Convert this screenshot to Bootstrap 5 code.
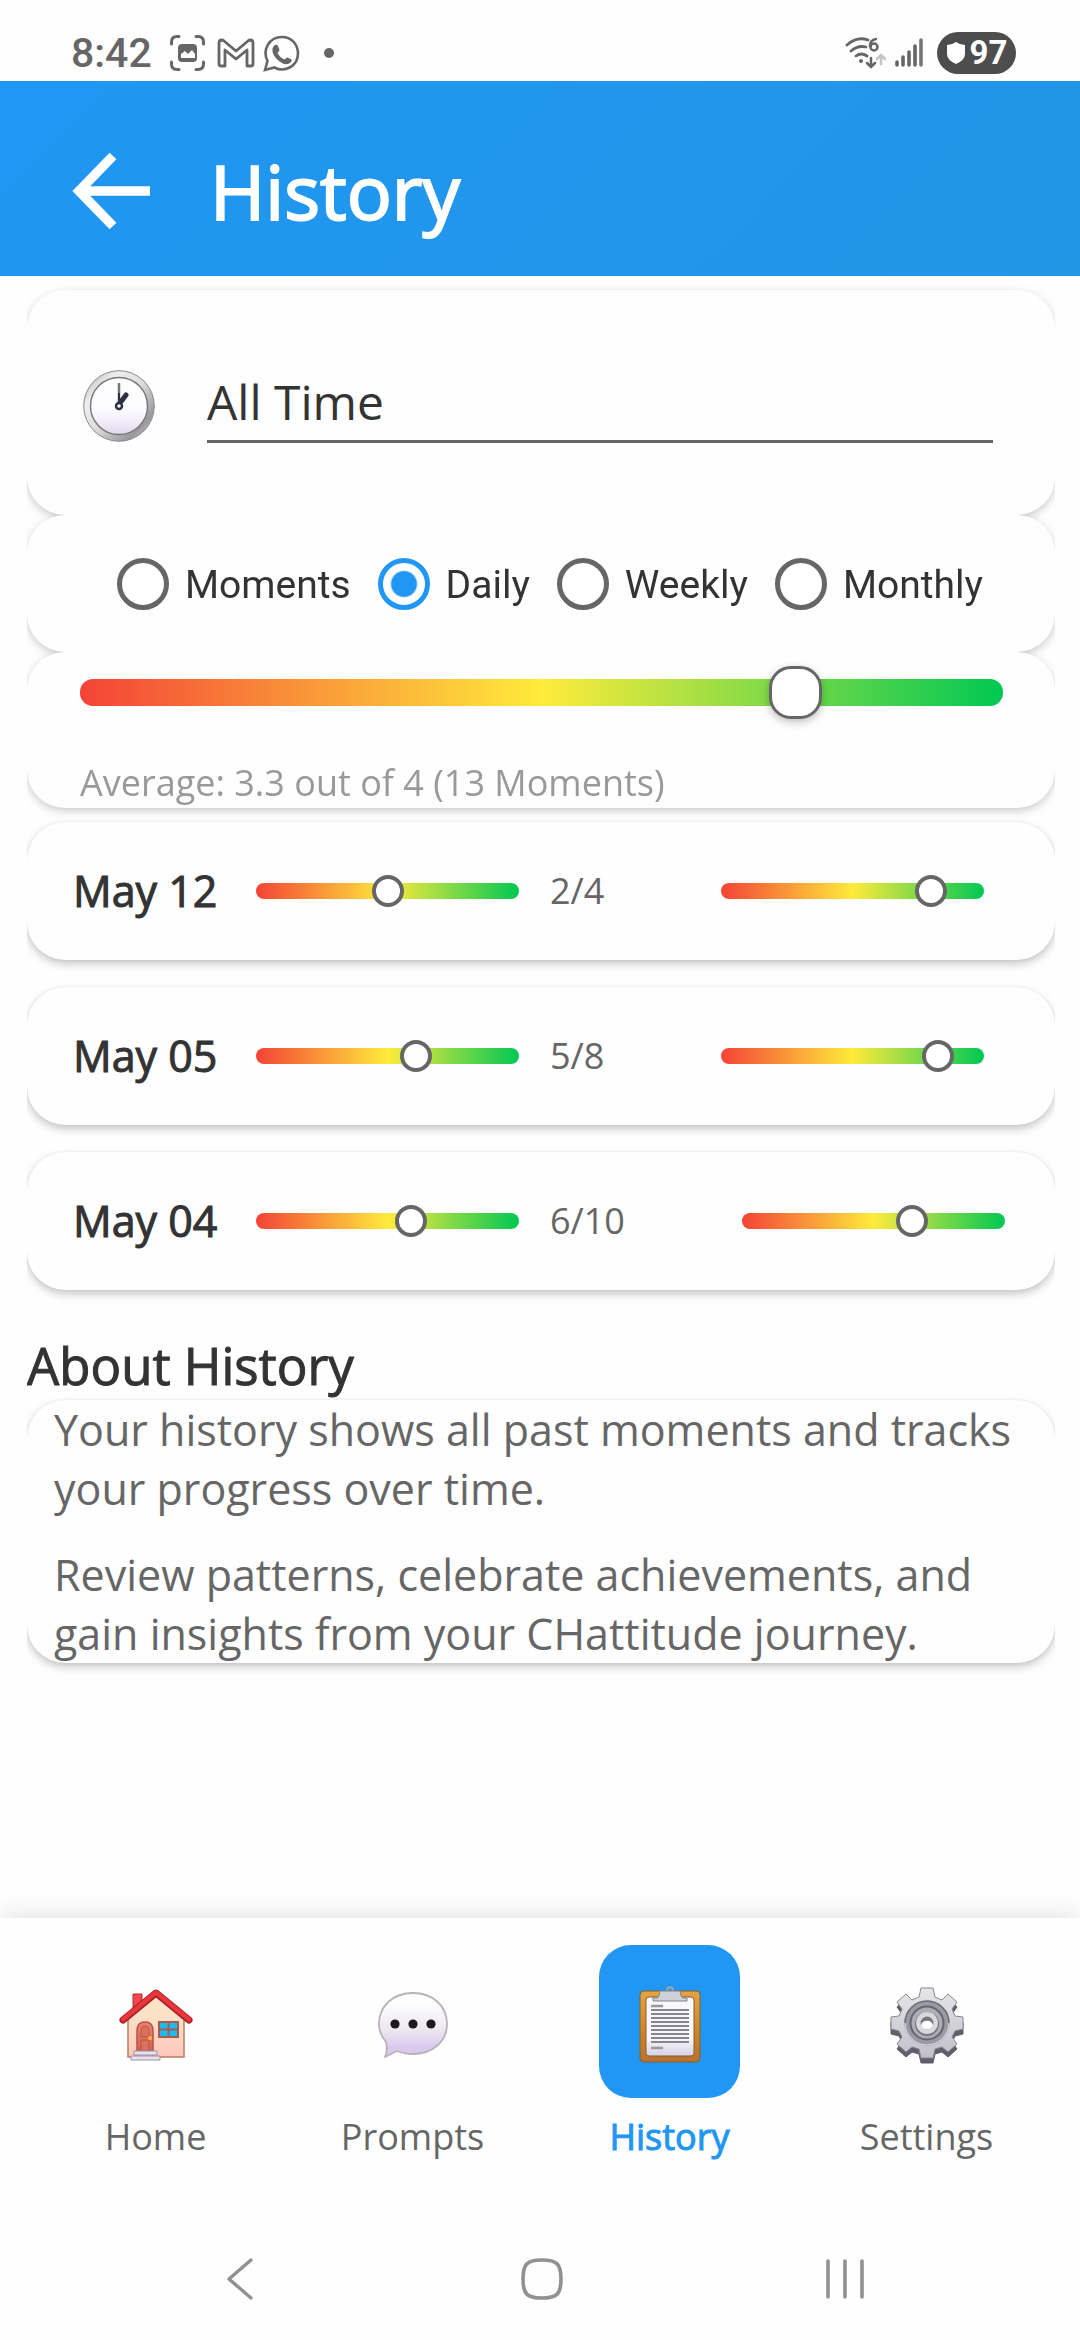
<!DOCTYPE html>
<html lang="en">
<head>
<meta charset="utf-8">
<meta name="viewport" content="width=device-width, initial-scale=1">
<title>History</title>
<link rel="stylesheet" href="https://cdn.jsdelivr.net/npm/bootstrap@5.3.0/dist/css/bootstrap.min.css">
<style>
  :root { --ink: #333; --soft: #666; --accent: #2196f3; --meter: linear-gradient(90deg, #f44336, #ffeb3b 50%, #00c853); }
  body { background: #fefefe; color: var(--ink); font-family: "Open Sans", "Noto Sans", sans-serif; }
  svg { display: block; flex: none; }

  .status-bar { height: 81px; padding: 25px 64px 0 71px; color: #666; font-family: Roboto, sans-serif; }
  .clock-text { font-size: 41px; font-weight: 500; line-height: 48px; width: 99px; }
  .battery { width: 79px; height: 42px; background: #4d4d4d; font-size: 33px; font-weight: 700; line-height: 42px; gap: 4px; margin-left: 14px; }

  .app-bar { background: linear-gradient(135deg, #2196f3, #2196e5); padding: 58px 72px 33px; gap: 59px; }
  .app-bar h1 { font-size: 75px; line-height: 104px; font-weight: 400; -webkit-text-stroke: 2px #fff; }

  .page { padding: 14px 25px 40px 27px; }
  .page-inner { overflow-x: clip; }
  .panel { background: #fefefe; border: 0; border-radius: 38px; box-shadow: 0 4px 8px rgba(0,0,0,.22), 0 0 2px rgba(0,0,0,.08); }
  .panel-stack { filter: drop-shadow(0 3px 4px rgba(0,0,0,.2)); }
  .panel-stack .panel { box-shadow: none; }

  .range-panel { padding: 78px 62px 72px 56px; gap: 52px; }
  .range-select { font-size: 48px; line-height: 66px; padding: 1px 0 5px; border: 0; border-bottom: 3px solid var(--soft); border-radius: 0; background: none; color: var(--ink); appearance: none; }

  .period-panel { padding: 43px 24px 42px 90px; gap: 27px; font-family: Roboto, sans-serif; font-size: 39px; line-height: 52px; }
  .period { gap: 16px; }
  .period label { padding-top: 2px; line-height: 50px; }
  .period .form-check-input { width: 52px; height: 52px; margin: 0; border: 5px solid var(--soft); background: #fff; }
  .period .form-check-input:checked { border-color: var(--accent); background: radial-gradient(circle, var(--accent) 12px, #fff 14px); }

  .average-panel { padding: 14px 52px 0 53px; }
  .average-text { font-size: 36px; line-height: 50px; color: #999; margin-top: 40px; }

  .meter { appearance: none; -webkit-appearance: none; display: block; margin: 0; width: 263px; height: 32px; background: none; flex: none; }
  .meter::-webkit-slider-runnable-track { height: 16px; border-radius: 8px; background: var(--meter); }
  .meter::-webkit-slider-thumb { -webkit-appearance: none; width: 32px; height: 32px; margin-top: -8px; border: 4px solid var(--soft); border-radius: 50%; background: #fff; }
  .meter-lg { width: 100%; height: 52px; }
  .meter-lg::-webkit-slider-runnable-track { height: 27px; border-radius: 13px; }
  .meter-lg::-webkit-slider-thumb { width: 53px; height: 53px; margin-top: -13px; border-width: 3px; border-radius: 22px; box-shadow: 0 3px 8px rgba(0,0,0,.25); }

  .day-list { gap: 27px; margin-top: 14px; }
  .day { height: 138px; padding: 0 46px; }
  .day-name { min-width: 183px; font-size: 43px; line-height: 58px; -webkit-text-stroke: 1px var(--ink); }
  .day-score { font-size: 36px; line-height: 50px; color: var(--soft); margin: 0 117px 0 31px; }

  .about-title { font-size: 51px; line-height: 70px; font-weight: 400; margin: 40px 0 0; -webkit-text-stroke: 1px var(--ink); }
  .about-panel { padding: 0 27px; font-size: 43px; line-height: 59px; color: var(--soft); gap: 27px; }

  .tab-bar { padding: 27px 25px 57px 27px; background: #fefefe; box-shadow: 0 -4px 24px rgba(0,0,0,.1); }
  .tab { gap: 14px; font-size: 36px; line-height: 50px; color: var(--soft); }
  .tab-icon { width: 141px; height: 153px; padding-top: 6px; border-radius: 32px; }
  .tab.active { color: var(--accent); -webkit-text-stroke: 1px var(--accent); }
  .tab.active .tab-icon { background: var(--accent); }
  .system-bar { height: 121px; padding: 0 84px 2px 89px; background: #fefefe; }
</style>
</head>
<body>
<div class="d-flex flex-column min-vh-100">
  <div class="status-bar d-flex align-items-center justify-content-between">
    <div class="d-flex align-items-center">
      <span class="clock-text">8:42</span>
      <svg width="35" height="36" viewBox="0 0 35 36" fill="none" stroke="#666" stroke-width="3" stroke-linecap="round"><path d="M1.500 9V7q0-5.500 5.500-5.500h2M26 1.500h2q5.500 0 5.500 5.500v2M33.500 27v2q0 5.500-5.500 5.500h-2M9 34.500H7q-5.500 0-5.500-5.500v-2"/><rect x="8" y="9" width="19" height="18" rx="4" fill="#666" stroke="none"/><path d="M11 23v-4l4-3 3 3 4-4 3 4v4z" fill="#fefefe" stroke="none"/></svg>
      <svg class="ms-2 ps-1" width="42" height="36" viewBox="0 0 38 36" fill="none" stroke="#666" stroke-width="2.800" stroke-linejoin="round"><path d="M2 29V8q0-3 3-3 1 0 2 1l12 10 12-10q1-1 2-1 3 0 3 3v21q0 2-2 2h-4V15l-11 9-11-9v16H4q-2 0-2-2z"/></svg>
      <svg class="ms-2" width="37" height="37" viewBox="0 0 37 37"><path d="M2 35 4.500 26C-1 15 6 2 19 2c9 0 16 7 16 16.500C35 31 22 38 11.500 32.500z" fill="none" stroke="#666" stroke-width="2.600"/><path d="M12 10q2-1 3 1l1.500 4q0 1-2 3 3 5 7 6.500 2-2 3-2l4 2q1 1-1 3-4 4-11-1-8-6-7-13 1-3 2.500-3.500z" fill="#666"/></svg>
      <svg class="ms-4" width="10" height="10" viewBox="0 0 10 10"><circle cx="5" cy="5" r="5" fill="#666"/></svg>
    </div>
    <div class="d-flex align-items-center">
      <svg width="42" height="34" viewBox="0 0 42 34" fill="none" stroke="#666" stroke-width="2.800" stroke-linecap="round"><path d="M2 9Q12 0 23 4M6 15q7-6 15-4M11 20q5-4 11 0"/><circle cx="16" cy="25" r="2" fill="#666" stroke="none"/><path d="M31 3q-6 1-6 7" stroke-width="2.500"/><circle cx="29" cy="11" r="3.500" stroke-width="2.500"/><path d="M26 22v9m-4-4 4 4 4-4" stroke-width="2.500"/><path d="M36 28v-9m-4 4 4-4 4 4" stroke="#c4c4c4" stroke-width="2.500"/></svg>
      <svg class="ms-2" width="28" height="32" viewBox="0 0 28 32" stroke="#666" stroke-width="3.600" stroke-linecap="round"><path d="M2 28v-3M8 28v-8M14 28V15M20 28V9"/><path d="M26 28V3" stroke="#777"/></svg>
      <div class="battery d-flex align-items-center justify-content-center rounded-pill text-white">
        <svg width="20" height="24" viewBox="0 0 20 24"><path d="M10 1Q14 4 19 4v9q0 6-9 10Q1 19 1 13V4q5 0 9-3z" fill="#fff"/></svg><span>97</span>
      </div>
    </div>
  </div>

  <header class="app-bar d-flex align-items-center text-white">
    <button type="button" class="btn p-0 border-0" aria-label="Back">
      <svg width="79" height="78" viewBox="0 0 79 78" fill="none" stroke="#fff" stroke-width="9.500"><path d="M78 39H9M41 4 7 39l34 35"/></svg>
    </button>
    <h1 class="m-0">History</h1>
  </header>

  <main class="page flex-grow-1">
    <div class="page-inner">
      <div class="panel-stack">
        <section class="panel range-panel d-flex align-items-center">
          <svg width="72" height="72" viewBox="0 0 72 72">
            <defs>
              <linearGradient id="rim" x1="0" y1="0" x2="1" y2="1"><stop offset="0" stop-color="#aaa"/><stop offset=".25" stop-color="#eee"/><stop offset=".5" stop-color="#ddd"/><stop offset=".8" stop-color="#99999d"/><stop offset="1" stop-color="#ddd"/></linearGradient>
              <linearGradient id="face" x1="0" y1="0" x2="0" y2="1"><stop offset="0" stop-color="#fff"/><stop offset=".6" stop-color="#fbfaff"/><stop offset="1" stop-color="#e2d8f0"/></linearGradient>
            </defs>
            <circle cx="36" cy="36" r="35.300" fill="url(#rim)" stroke="#8a8a8a"/>
            <circle cx="36" cy="36" r="28.500" fill="url(#face)" stroke="#777" stroke-width="1.400"/>
            <path d="M36 34V13" stroke="#777" stroke-width="2.500"/><path d="M37 33l6-8" stroke="#2d3040" stroke-width="5" stroke-linecap="round"/><path d="M36 34V23" stroke="#2d3040" stroke-width="2"/>
            <circle cx="36" cy="36" r="3" fill="#fff" stroke="#2d3040" stroke-width="2.500"/>
          </svg>
          <select class="range-select w-100" aria-label="Time range"><option>All Time</option></select>
        </section>

        <section class="panel period-panel d-flex">
          <div class="period d-flex align-items-center"><input class="form-check-input" type="radio" name="period" id="p1"><label for="p1">Moments</label></div>
          <div class="period d-flex align-items-center"><input class="form-check-input" type="radio" name="period" id="p2" checked><label for="p2">Daily</label></div>
          <div class="period d-flex align-items-center"><input class="form-check-input" type="radio" name="period" id="p3"><label for="p3">Weekly</label></div>
          <div class="period d-flex align-items-center"><input class="form-check-input" type="radio" name="period" id="p4"><label for="p4">Monthly</label></div>
        </section>

        <section class="panel average-panel">
          <input type="range" class="meter meter-lg" id="avg" min="0" max="1000" value="792">
          <label class="average-text d-block" for="avg">Average: 3.3 out of 4 (13 Moments)</label>
        </section>
      </div>

      <div class="day-list d-flex flex-column">
        <div class="panel day d-flex align-items-center">
          <div class="day-name">May 12</div>
          <input type="range" class="meter" min="0" max="1000" value="500" aria-label="May 12 completed">
          <div class="day-score">2/4</div>
          <input type="range" class="meter" min="0" max="1000" value="837" aria-label="May 12 average">
        </div>
        <div class="panel day d-flex align-items-center">
          <div class="day-name">May 05</div>
          <input type="range" class="meter" min="0" max="1000" value="625" aria-label="May 05 completed">
          <div class="day-score">5/8</div>
          <input type="range" class="meter" min="0" max="1000" value="870" aria-label="May 05 average">
        </div>
        <div class="panel day d-flex align-items-center">
          <div class="day-name">May 04</div>
          <input type="range" class="meter" min="0" max="1000" value="600" aria-label="May 04 completed">
          <div class="day-score">6/10</div>
          <input type="range" class="meter" min="0" max="1000" value="667" aria-label="May 04 average">
        </div>
      </div>

      <h2 class="about-title">About History</h2>
      <section class="panel about-panel d-flex flex-column">
        <p class="m-0">Your history shows all past moments and tracks your progress over time.</p>
        <p class="m-0">Review patterns, celebrate achievements, and gain insights from your CHattitude journey.</p>
      </section>
    </div>
  </main>

  <nav class="tab-bar row row-cols-4 g-0" aria-label="Main">
    <a href="#" class="tab col d-flex flex-column align-items-center text-decoration-none">
      <span class="tab-icon d-flex align-items-center justify-content-center">
        <svg width="74" height="76" viewBox="0 0 74 76">
          <defs><linearGradient id="wall" x1="0" y1="0" x2="0" y2="1"><stop offset=".3" stop-color="#fae3c8"/><stop offset="1" stop-color="#ffc6bd"/></linearGradient>
          <linearGradient id="door" x1="0" y1="0" x2="0" y2="1"><stop offset="0" stop-color="#ee8570"/><stop offset="1" stop-color="#cf6154"/></linearGradient></defs>
          <path d="M14 7h9v16l-9 8z" fill="#f0474f" stroke="#b72a30"/>
          <path d="M9 30 37 8l28 22v40H9z" fill="url(#wall)" stroke="#b97f60" stroke-width="1.500"/>
          <path d="M4 33 37 6l33 27" fill="none" stroke="#a81c22" stroke-width="7" stroke-linecap="round" stroke-linejoin="round"/>
          <path d="M4 32.500 37 5.500l33 27" fill="none" stroke="#e9363d" stroke-width="4.500" stroke-linecap="round" stroke-linejoin="round"/>
          <path d="M18 66V44q0-9 8-9t8 9v22z" fill="url(#door)" stroke="#b75345" stroke-width="1.500"/><path d="M22 50v-6q0-5 4-5t4 5v6zM22 53h8v11h-8z" fill="#dc705f" stroke="#b95546"/><circle cx="31" cy="51" r="2" fill="#ffb62e"/>
          <path d="M40 35h19v15H40z" fill="#1bbdf0" stroke="#a95b50" stroke-width="2"/><path d="M49.500 35v15M40 42.500h19" stroke="#a95b50" stroke-width="2"/>
          <path d="M15 64h23v4H15zM12 69h29v4H12z" fill="#e8e2ee" stroke="#98919e"/>
        </svg>
      </span>
      <span>Home</span>
    </a>
    <a href="#" class="tab col d-flex flex-column align-items-center text-decoration-none">
      <span class="tab-icon d-flex align-items-center justify-content-center">
        <svg width="72" height="68" viewBox="0 0 72 68">
          <defs><linearGradient id="bub" x1="0" y1="0" x2="0" y2="1"><stop offset=".1" stop-color="#fff"/><stop offset=".55" stop-color="#eeeaf0"/><stop offset=".85" stop-color="#dacaed"/></linearGradient></defs>
          <path d="M36 2c20 0 34 13 34 31S55 63 36 63q-9 0-16-3-6 3-12 6 3-7 1-15Q2 43 2 33C2 15 16 2 36 2z" fill="url(#bub)" stroke="#b8b2ba" stroke-width="1.800" stroke-linejoin="round"/>
          <g fill="#201722"><circle cx="18" cy="33" r="4.600"/><circle cx="36" cy="33" r="4.600"/><circle cx="54" cy="33" r="4.600"/></g>
        </svg>
      </span>
      <span>Prompts</span>
    </a>
    <a href="#" class="tab active col d-flex flex-column align-items-center text-decoration-none" aria-current="page">
      <span class="tab-icon d-flex align-items-center justify-content-center">
        <svg width="62" height="78" viewBox="0 0 62 78">
          <defs><linearGradient id="board" x1="0" y1="0" x2="0" y2="1"><stop offset="0" stop-color="#e5a342"/><stop offset=".7" stop-color="#c97e25"/><stop offset="1" stop-color="#b96f31"/></linearGradient>
          <linearGradient id="paper" x1="0" y1="0" x2="0" y2="1"><stop offset=".7" stop-color="#f8f8fc"/><stop offset="1" stop-color="#d5d0e4"/></linearGradient></defs>
          <rect x="1" y="5" width="60" height="71" rx="4" fill="url(#board)" stroke="#7c642f"/>
          <rect x="7" y="11" width="48" height="59" rx="3" fill="url(#paper)" stroke="#865f2c"/>
          <path d="M12 20h12M12 62h12" stroke="#999" stroke-width="2.500"/>
          <path d="M12 24h38M12 28h38M12 32h38M12 36h38M12 40h38M12 44h38M12 48h38M12 52h38M12 56h38" stroke="#878590" stroke-width="1.800"/>
          <circle cx="31" cy="4" r="2.800" fill="none" stroke="#9aa7b4" stroke-width="2"/>
          <path d="M21 5h20q1 7 3 7h4v3H14v-3h4q2 0 3-7z" fill="#cfd1d8" stroke="#7e8490"/>
        </svg>
      </span>
      <span>History</span>
    </a>
    <a href="#" class="tab col d-flex flex-column align-items-center text-decoration-none">
      <span class="tab-icon d-flex align-items-center justify-content-center">
        <svg width="74" height="78" viewBox="0 0 74 78">
          <defs><linearGradient id="gear" x1="0" y1="0" x2="0" y2="1"><stop offset="0" stop-color="#e6e6e8"/><stop offset="1" stop-color="#c2bfcb"/></linearGradient>
          <path id="cog" d="M31 2h12l2 9 7 3 6-6 9 8-5 7 3 7 8 1v12l-8 2-3 6 5 7-9 8-6-5-7 2-2 9H31l-2-9-7-2-6 5-9-8 5-7-3-6-8-2V31l8-1 3-7-5-7 9-8 6 6 7-3z" stroke-linejoin="round"/></defs>
          <use href="#cog" y="5" fill="#625d6b" stroke="#625d6b"/>
          <use href="#cog" fill="url(#gear)" stroke="#88868e"/>
          <circle cx="37" cy="37" r="22" fill="#9a9aa3" stroke="#686872" stroke-width="1.500"/><path d="M15 37a22 22 0 0 0 44 0" fill="none" stroke="#d5d3dc" stroke-width="1.500"/>
          <circle cx="37" cy="37" r="16.500" fill="#aeadb6" stroke="#666673" stroke-width="2"/>
          <circle cx="37" cy="38" r="12" fill="#77757f"/><circle cx="37" cy="37" r="8.700" fill="#77757f" stroke="#d9d8dd" stroke-width="4.500"/>
          <ellipse cx="37" cy="39" rx="5.800" ry="4.300" fill="#fff"/>
        </svg>
      </span>
      <span>Settings</span>
    </a>
  </nav>

  <div class="system-bar position-relative row row-cols-3 g-0 align-items-center">
    <button type="button" class="btn col border-0 p-0 d-flex justify-content-center" aria-label="System back"><svg width="28" height="44" viewBox="0 0 28 44" fill="none" stroke="#919191" stroke-width="3.400" stroke-linecap="round" stroke-linejoin="round"><path d="M25 3 3 22l22 19"/></svg></button>
    <button type="button" class="btn col border-0 p-0 d-flex justify-content-center" aria-label="System home"><svg width="44" height="44" viewBox="0 0 44 44" fill="none" stroke="#919191" stroke-width="3.600"><path d="M22 3c15 0 19 4 19 19s-4 19-19 19S3 37 3 22 7 3 22 3z"/></svg></button>
    <button type="button" class="btn col border-0 p-0 d-flex justify-content-center" aria-label="Recent apps"><svg width="40" height="42" viewBox="0 0 40 42" stroke="#919191" stroke-width="3.600" stroke-linecap="round"><path d="M3 3v36M20 3v36M37 3v36"/></svg></button>
  </div>
</div>
<script src="https://cdn.jsdelivr.net/npm/bootstrap@5.3.0/dist/js/bootstrap.bundle.min.js"></script>
</body>
</html>
